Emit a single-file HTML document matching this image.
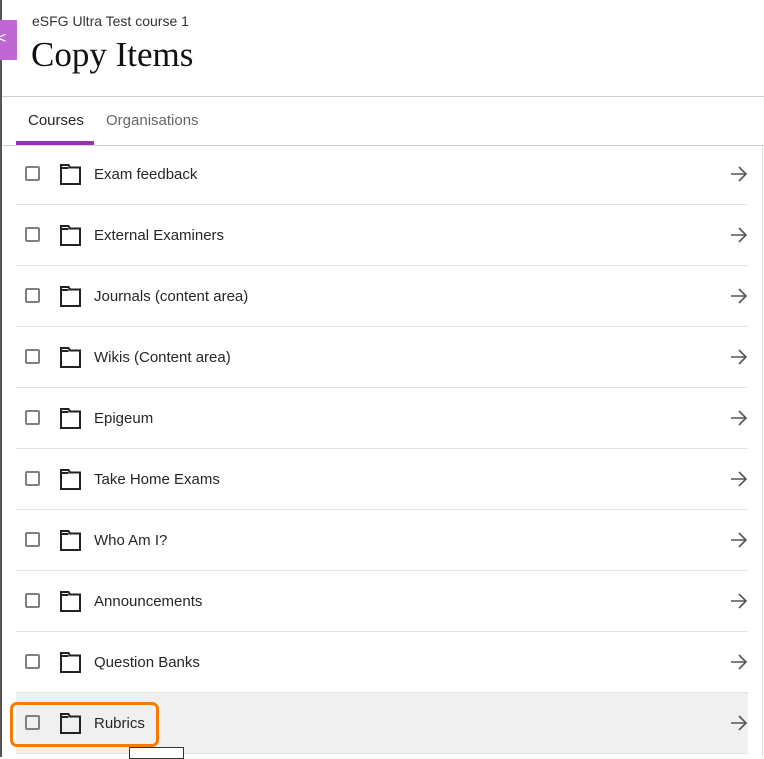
<!DOCTYPE html>
<html><head><meta charset="utf-8"><style>
*{margin:0;padding:0;box-sizing:border-box}
body{width:764px;height:757px;overflow:hidden;background:#fff;font-family:"Liberation Sans",sans-serif;color:#262626;position:relative}
.lb{position:absolute;left:0;top:0;width:2px;height:757px;background:#555}
.rb{position:absolute;right:1px;top:146px;width:1px;height:611px;background:#e0e0e0}
.back{position:absolute;left:0;top:20px;width:17px;height:40px;background:#c167d4}
.back span{position:absolute;left:-3px;top:10px;color:#fff;font-size:16px}
.sub{position:absolute;left:32px;top:13px;font-size:14px;color:#333}
h1{position:absolute;left:31px;top:35px;font-family:"Liberation Serif",serif;font-weight:normal;font-size:35px;color:#111}
.hr{position:absolute;left:2px;top:96px;width:762px;height:1px;background:#cfcfcf}
.tab{position:absolute;top:112px;font-size:15px}
.ul{position:absolute;left:16px;top:141px;width:78px;height:4px;background:#9b30b5}
.hr2{position:absolute;left:2px;top:145px;width:762px;height:1px;background:#cfcfcf}
.row{position:absolute;left:16px;width:732px;height:61px;border-bottom:1px solid #e3e3e3}
.cb{position:absolute;left:9px;top:22px;width:15px;height:15px;border:2px solid #808080;border-radius:2px}
.fd{position:absolute;left:44px;top:20px}
.tx{position:absolute;left:78px;top:22px;font-size:15px;color:#262626}
.ar{position:absolute;right:0;top:21px}
.hl{background:#f0f0f0}
.or{position:absolute;left:10px;top:702px;width:149px;height:45px;border:3px solid #f57c00;border-radius:7px}
.sm{position:absolute;left:129px;top:747px;width:55px;height:12px;border:1px solid #333;background:#fff}
</style></head><body>
<div class="lb"></div><div class="rb"></div>
<div class="back"><span>&lt;</span></div>
<div class="sub">eSFG Ultra Test course 1</div>
<h1>Copy Items</h1>
<div class="hr"></div>
<div class="tab" style="left:28px;color:#262626">Courses</div>
<div class="tab" style="left:106px;color:#666">Organisations</div>
<div class="ul"></div><div class="hr2"></div>

<div class="row" style="top:144px"><div class="cb"></div><svg class="fd" width="21" height="21" viewBox="0 0 21 21"><path d="M1 1H8.5L10 3.5H20V20H1Z M1 4H8.5" fill="none" stroke="#222" stroke-width="2"/></svg><div class="tx">Exam feedback</div><svg class="ar" width="18" height="18" viewBox="0 0 18 18"><path d="M1 9h15M9 2l7 7-7 7" fill="none" stroke="#555" stroke-width="1.6"/></svg></div>
<div class="row" style="top:205px"><div class="cb"></div><svg class="fd" width="21" height="21" viewBox="0 0 21 21"><path d="M1 1H8.5L10 3.5H20V20H1Z M1 4H8.5" fill="none" stroke="#222" stroke-width="2"/></svg><div class="tx">External Examiners</div><svg class="ar" width="18" height="18" viewBox="0 0 18 18"><path d="M1 9h15M9 2l7 7-7 7" fill="none" stroke="#555" stroke-width="1.6"/></svg></div>
<div class="row" style="top:266px"><div class="cb"></div><svg class="fd" width="21" height="21" viewBox="0 0 21 21"><path d="M1 1H8.5L10 3.5H20V20H1Z M1 4H8.5" fill="none" stroke="#222" stroke-width="2"/></svg><div class="tx">Journals (content area)</div><svg class="ar" width="18" height="18" viewBox="0 0 18 18"><path d="M1 9h15M9 2l7 7-7 7" fill="none" stroke="#555" stroke-width="1.6"/></svg></div>
<div class="row" style="top:327px"><div class="cb"></div><svg class="fd" width="21" height="21" viewBox="0 0 21 21"><path d="M1 1H8.5L10 3.5H20V20H1Z M1 4H8.5" fill="none" stroke="#222" stroke-width="2"/></svg><div class="tx">Wikis (Content area)</div><svg class="ar" width="18" height="18" viewBox="0 0 18 18"><path d="M1 9h15M9 2l7 7-7 7" fill="none" stroke="#555" stroke-width="1.6"/></svg></div>
<div class="row" style="top:388px"><div class="cb"></div><svg class="fd" width="21" height="21" viewBox="0 0 21 21"><path d="M1 1H8.5L10 3.5H20V20H1Z M1 4H8.5" fill="none" stroke="#222" stroke-width="2"/></svg><div class="tx">Epigeum</div><svg class="ar" width="18" height="18" viewBox="0 0 18 18"><path d="M1 9h15M9 2l7 7-7 7" fill="none" stroke="#555" stroke-width="1.6"/></svg></div>
<div class="row" style="top:449px"><div class="cb"></div><svg class="fd" width="21" height="21" viewBox="0 0 21 21"><path d="M1 1H8.5L10 3.5H20V20H1Z M1 4H8.5" fill="none" stroke="#222" stroke-width="2"/></svg><div class="tx">Take Home Exams</div><svg class="ar" width="18" height="18" viewBox="0 0 18 18"><path d="M1 9h15M9 2l7 7-7 7" fill="none" stroke="#555" stroke-width="1.6"/></svg></div>
<div class="row" style="top:510px"><div class="cb"></div><svg class="fd" width="21" height="21" viewBox="0 0 21 21"><path d="M1 1H8.5L10 3.5H20V20H1Z M1 4H8.5" fill="none" stroke="#222" stroke-width="2"/></svg><div class="tx">Who Am I?</div><svg class="ar" width="18" height="18" viewBox="0 0 18 18"><path d="M1 9h15M9 2l7 7-7 7" fill="none" stroke="#555" stroke-width="1.6"/></svg></div>
<div class="row" style="top:571px"><div class="cb"></div><svg class="fd" width="21" height="21" viewBox="0 0 21 21"><path d="M1 1H8.5L10 3.5H20V20H1Z M1 4H8.5" fill="none" stroke="#222" stroke-width="2"/></svg><div class="tx">Announcements</div><svg class="ar" width="18" height="18" viewBox="0 0 18 18"><path d="M1 9h15M9 2l7 7-7 7" fill="none" stroke="#555" stroke-width="1.6"/></svg></div>
<div class="row" style="top:632px"><div class="cb"></div><svg class="fd" width="21" height="21" viewBox="0 0 21 21"><path d="M1 1H8.5L10 3.5H20V20H1Z M1 4H8.5" fill="none" stroke="#222" stroke-width="2"/></svg><div class="tx">Question Banks</div><svg class="ar" width="18" height="18" viewBox="0 0 18 18"><path d="M1 9h15M9 2l7 7-7 7" fill="none" stroke="#555" stroke-width="1.6"/></svg></div>
<div class="row hl" style="top:693px"><div class="cb"></div><svg class="fd" width="21" height="21" viewBox="0 0 21 21"><path d="M1 1H8.5L10 3.5H20V20H1Z M1 4H8.5" fill="none" stroke="#222" stroke-width="2"/></svg><div class="tx">Rubrics</div><svg class="ar" width="18" height="18" viewBox="0 0 18 18"><path d="M1 9h15M9 2l7 7-7 7" fill="none" stroke="#555" stroke-width="1.6"/></svg></div>
<div class="or"></div>
<div class="sm"></div>
</body></html>
